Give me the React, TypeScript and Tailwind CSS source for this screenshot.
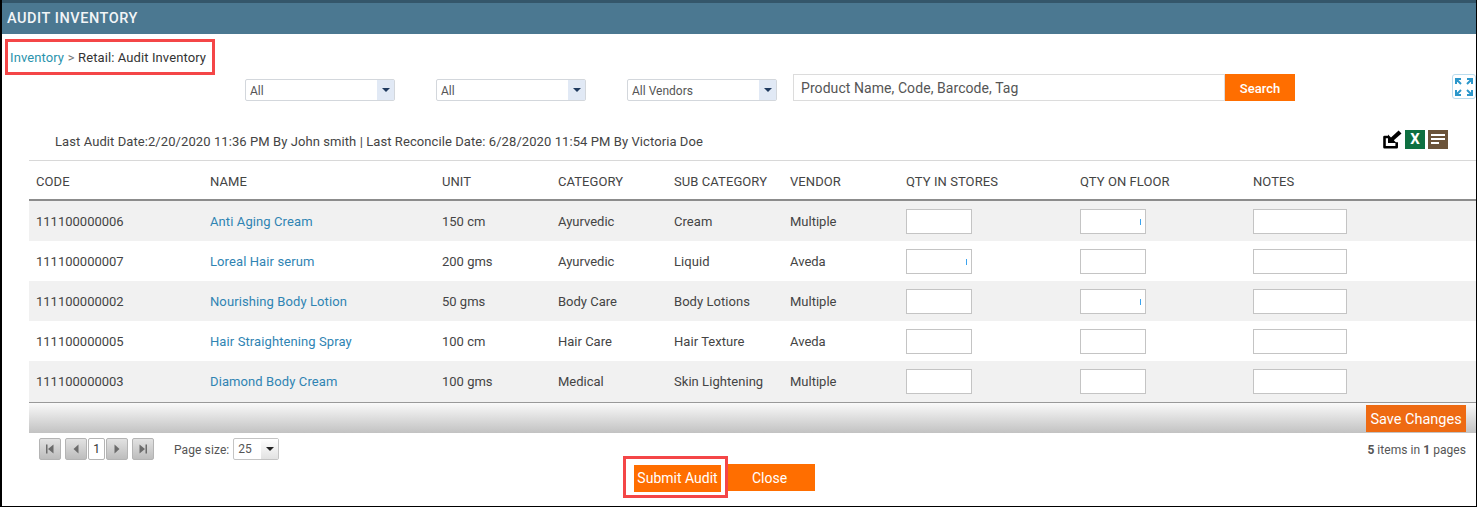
import React from 'react';

interface Product {
  code: string;
  name: string;
  unit: string;
  category: string;
  subCategory: string;
  vendor: string;
  storeTick?: boolean;
  floorTick?: boolean;
}

const products: Product[] = [
  { code: '111100000006', name: 'Anti Aging Cream', unit: '150 cm', category: 'Ayurvedic', subCategory: 'Cream', vendor: 'Multiple', floorTick: true },
  { code: '111100000007', name: 'Loreal Hair serum', unit: '200 gms', category: 'Ayurvedic', subCategory: 'Liquid', vendor: 'Aveda', storeTick: true },
  { code: '111100000002', name: 'Nourishing Body Lotion', unit: '50 gms', category: 'Body Care', subCategory: 'Body Lotions', vendor: 'Multiple', floorTick: true },
  { code: '111100000005', name: 'Hair Straightening Spray', unit: '100 cm', category: 'Hair Care', subCategory: 'Hair Texture', vendor: 'Aveda' },
  { code: '111100000003', name: 'Diamond Body Cream', unit: '100 gms', category: 'Medical', subCategory: 'Skin Lightening', vendor: 'Multiple' },
];

const columns = ['CODE', 'NAME', 'UNIT', 'CATEGORY', 'SUB CATEGORY', 'VENDOR', 'QTY IN STORES', 'QTY ON FLOOR', 'NOTES'];

const gridCols = 'grid grid-cols-[174px_232px_116px_116px_116px_116px_174px_173px_1fr]';

const FilterSelect: React.FC<{ label: string }> = ({ label }) => (
  <div className="flex h-[22px] w-[150px] items-stretch rounded-[2px] border border-[#d3d7dc] bg-white">
    <span className="flex-1 pl-[4px] text-[12px] leading-[22px] text-[#555]">{label}</span>
    <span className="flex w-[17px] items-center justify-center bg-[#e1e9f5]">
      <span className="h-0 w-0 border-x-[4px] border-t-[4px] border-x-transparent border-t-[#1f3a5f]" />
    </span>
  </div>
);

const QtyInput: React.FC<{ width: string; tick?: boolean }> = ({ width, tick }) => (
  <div className={`relative h-[25px] ${width}`}>
    <input className="h-full w-full border border-[#c4c4c4] bg-white outline-none" />
    {tick && <span className="absolute right-[5px] top-[10px] h-[6px] w-[1.5px] bg-[#3ba3ee]" />}
  </div>
);

const PagerButton: React.FC<{ children: React.ReactNode }> = ({ children }) => (
  <button className="flex h-[22px] w-[22px] items-center justify-center rounded-[2px] border border-[#b4b4b4] bg-gradient-to-b from-[#e2e2e2] to-[#bdbdbd]">
    <svg width="12" height="12" viewBox="0 0 12 12" fill="#6b6b6b">
      {children}
    </svg>
  </button>
);

export default function App() {
  return (
    <div className="flex h-[507px] w-[1477px] flex-col overflow-hidden border-x border-b border-black bg-white font-['Roboto',sans-serif] text-[13px] text-[#444] [border-left-width:2px]">
      <div className="flex h-[34px] items-center border-t-[3px] border-[#34566a] bg-[#4b7891] pl-[5px] text-[14.5px] font-medium tracking-[0.55px] text-[#f2f5f7]">
        AUDIT INVENTORY
      </div>

      <div className="ml-[3px] mt-[5px] flex h-[36px] w-[210px] items-center border-[3px] border-[#f44647] pl-[2px] pt-[2px] text-[13px] tracking-[0.1px] text-[#333]">
        <a className="text-[#2b93ad]">Inventory</a>
        <span className="mx-[3.5px] text-[#777]">&gt;</span>
        <span>Retail: Audit Inventory</span>
      </div>

      <div className="-mt-px flex h-[27px] items-end pl-[243px]">
        <FilterSelect label="All" />
        <div className="w-[41px]" />
        <FilterSelect label="All" />
        <div className="w-[41px]" />
        <FilterSelect label="All Vendors" />
        <div className="ml-[16px] flex h-[27px] w-[432px] items-center border border-[#dcdcdc] pl-[7px] pt-[2px] text-[14px] tracking-[0.07px] text-[#555]">
          Product Name, Code, Barcode, Tag
        </div>
        <button className="h-[27px] w-[70px] bg-[#ff6e00] pt-[2px] text-[13px] font-medium text-white">Search</button>
        <div className="ml-[157px] flex h-[25px] w-[24px] items-center justify-center self-start rounded-[3px] border border-[#b9dcee]">
          <svg width="20" height="20" viewBox="0 0 20 20" fill="none" stroke="#2b97cb" strokeWidth="2">
            <path d="M2 7V2h5M2 2l5 5M13 2h5v5M18 2l-5 5M2 13v5h5M2 18l5-5M18 13v5h-5M18 18l-5-5" />
          </svg>
        </div>
      </div>

      <div className="flex h-[59px] items-center pl-[53px] pr-[28px]">
        <span className="mt-[22px] flex-1 tracking-[0.08px] text-[#444]">
          Last Audit Date:2/20/2020 11:36 PM By John smith | Last Reconcile Date: 6/28/2020 11:54 PM By Victoria Doe
        </span>
        <div className="mt-[17px] flex items-center gap-[3px]">
          <svg width="19" height="19" viewBox="0 0 19 19">
            <path d="M5.5 7H1.5v10.2h12.2v-5" fill="none" stroke="#000" strokeWidth="2.6" strokeLinejoin="round" />
            <path d="M5 4.5v8.5h8.5l-2.7-2.7L18.5 3.6 15.6 0.5 8 7.5z" fill="#000" />
          </svg>
          <span className="flex h-[19px] w-[20px] items-center justify-center bg-[#0e7041] text-[15px] font-bold leading-none text-white">X</span>
          <span className="flex h-[19px] w-[20px] flex-col justify-center gap-[2px] bg-[#6b5339] pl-[3px]">
            <span className="h-[2px] w-[14px] bg-white" />
            <span className="h-[2px] w-[14px] bg-white" />
            <span className="h-[2px] w-[8px] bg-white" />
          </span>
        </div>
      </div>

      <div className="ml-[27px] bg-[#f1f1f1]">
        <div className={`${gridCols} h-[41px] items-center border-y border-t-[#d8d8d8] border-b-[#8c8c8c] bg-white pl-[7px] text-[#444] [border-bottom-width:2px]`}>
          {columns.map((col) => (
            <div key={col} className="pt-[4px] tracking-[0.08px]">{col}</div>
          ))}
        </div>

        {products.map((p, i) => (
          <div key={p.code} className={`${gridCols} h-[40px] items-center pl-[7px] ${i % 2 === 0 ? 'bg-[#f1f1f1]' : 'bg-white'}`}>
            <div className="pt-[2px]">{p.code}</div>
            <a className="pt-[2px] tracking-[0.1px] text-[#2f84b3]">{p.name}</a>
            <div className="pt-[2px]">{p.unit}</div>
            <div className="pt-[2px]">{p.category}</div>
            <div className="pt-[2px] tracking-[0.05px]">{p.subCategory}</div>
            <div className="pt-[2px]">{p.vendor}</div>
            <QtyInput width="w-[66px]" tick={p.storeTick} />
            <QtyInput width="w-[66px]" tick={p.floorTick} />
            <QtyInput width="w-[94px]" />
          </div>
        ))}

        <div className="mt-px flex h-[31px] justify-end border-t border-[#999] bg-gradient-to-b from-[#fafafa] to-[#c2c2c2] pr-[10px] pt-[2px]">
          <button className="h-[27px] w-[100px] bg-[#ee6a12] pt-[2px] text-[14.5px] text-white">Save Changes</button>
        </div>
      </div>

      <div className="mt-[5px] flex h-[22px] items-center pl-[37px] pr-[10px] text-[12px] text-[#555]">
        <PagerButton>
          <path d="M2 1.5h1.5v9H2zM9.5 1.5v9L4 6z" />
        </PagerButton>
        <div className="w-[4px]" />
        <PagerButton>
          <path d="M8.5 1.5v9L3.5 6z" />
        </PagerButton>
        <span className="mx-px flex h-[22px] w-[17px] items-center justify-center rounded-[2px] border border-[#b4b4b4] bg-white text-[#333]">1</span>
        <PagerButton>
          <path d="M3.5 1.5v9l5-4.5z" />
        </PagerButton>
        <div className="w-[4px]" />
        <PagerButton>
          <path d="M2.5 1.5v9L8 6zM8.5 1.5H10v9H8.5z" />
        </PagerButton>
        <span className="ml-[20px] pt-[2px] tracking-[0.1px]">Page size:</span>
        <div className="ml-[4px] flex h-[22px] w-[46px] items-stretch rounded-[2px] border border-[#c4c4c4]">
          <span className="flex-1 pl-[4px] leading-[20px]">25</span>
          <span className="flex w-[17px] items-center justify-center bg-gradient-to-b from-white to-[#e2e2e2]">
            <span className="h-0 w-0 border-x-[4px] border-t-[4px] border-x-transparent border-t-[#222]" />
          </span>
        </div>
        <span className="ml-auto pt-[2px] tracking-[0.05px]">
          <b>5</b> items in <b>1</b> pages
        </span>
      </div>

      <div className="-mt-[4px] flex items-start pl-[621px]">
        <div className="border-[3px] border-[#f44647] pb-[3px] pl-[8px] pr-[4px] pt-[6px]">
          <button className="h-[27px] w-[87px] bg-[#ff6e00] text-[14px] text-white">Submit Audit</button>
        </div>
        <button className="mt-[8px] h-[27px] w-[87px] bg-[#ff6e00] pr-[4px] pt-[2px] text-[14px] text-white">Close</button>
      </div>
    </div>
  );
}
